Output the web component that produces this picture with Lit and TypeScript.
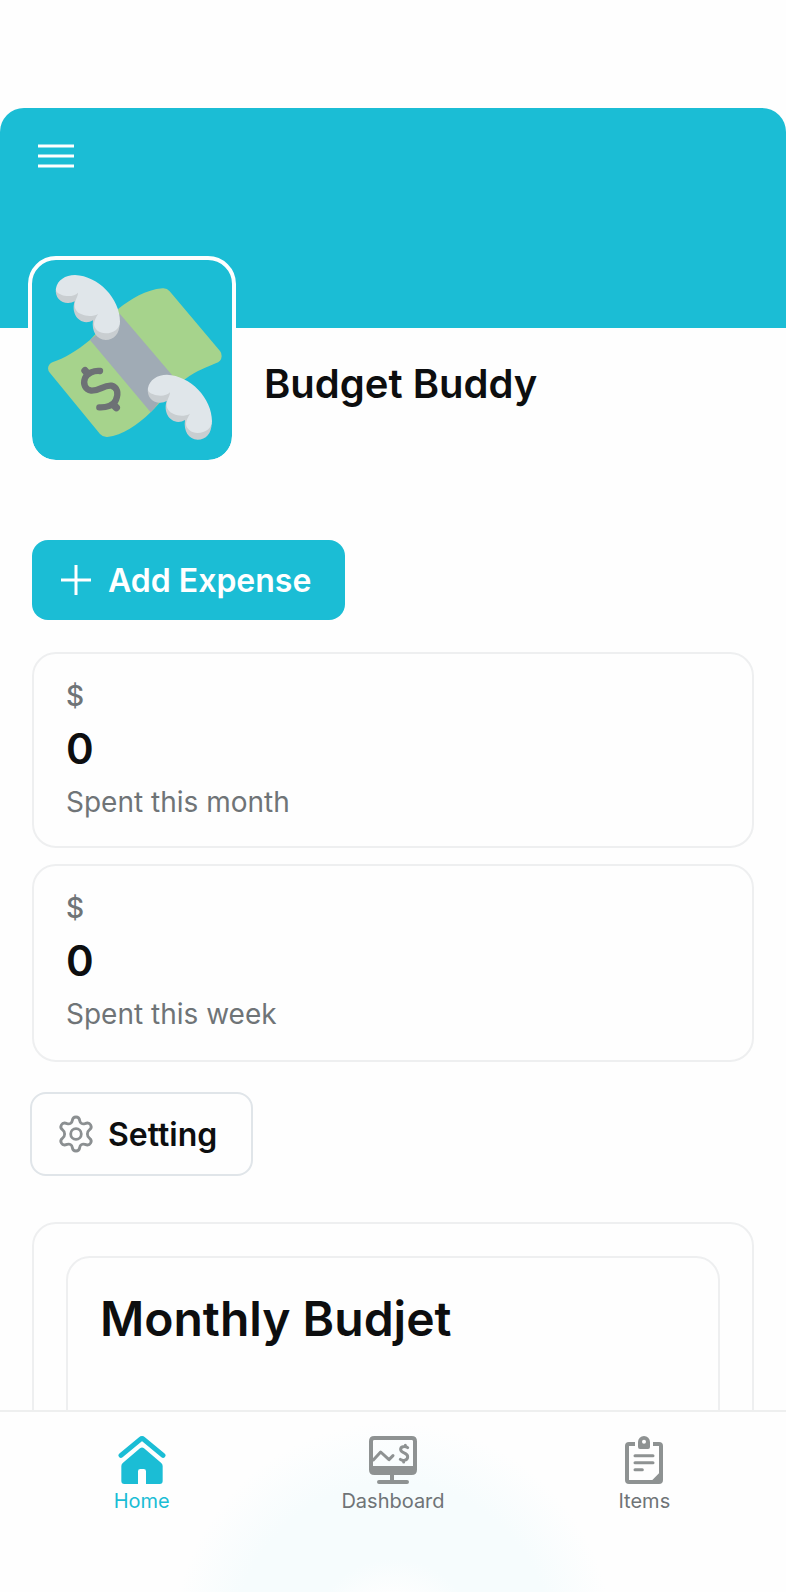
import { LitElement, html, css, svg } from "lit";
import { customElement, property } from "lit/decorators.js";

const moneyArt = html`
  <svg class="art" viewBox="36 45 600 600" aria-hidden="true">
    <path fill="#a6d38c" d="M210 285C172 317 130 341 99 351Q85 356 84 370Q84 378 90 384L240 567Q249 577 262 576C308 571 352 540 392 502C424 470 457 424 496 402C530 377 560 367 587 355Q604 350 605 334Q606 325 600 318L449 139Q441 129 428 130C377 134 333 163 297 190Z"/>
    <path fill="#a0abb5" d="M210 285C245 258 272 232 300 207L456 390C440 432 420 476 392 502Z"/>
    <g fill="none" stroke="#6d7175" stroke-linecap="round" stroke-linejoin="round">
      <path stroke-width="19" d="M240 378C222 376 202 384 195 399C188 418 196 434 214 437C239 438 250 420 274 422C293 427 296 445 288 464C282 482 258 488 238 487"/>
      <path stroke-width="22" d="M195 377L203 386M281 480L289 488"/>
    </g>
    ${[0, 1].map(
      (i) => svg`
      <g transform=${i ? "translate(276 299)" : "translate(0 0)"}>
        <path fill="#c9ced1" d="M108 130C103 158 124 175 145 174Q156 174 164 169C154 199 169 230 199 232Q210 232 219 226C214 260 230 284 257 285C282 285 299 267 299 235L225 140Z"/>
        <path fill="#e0e6ea" d="M108 130C112 106 136 90 165 90C235 93 300 160 300 230C300 251 280 265 257 265C238 264 223 254 222 238Q222 226 234 207C220 215 200 215 185 208C170 202 163 191 164 179C165 163 174 155 174 143C164 155 140 156 124 149C112 145 106 139 108 130Z"/>
      </g>`
    )}
  </svg>
`;

const menuIcon = html`<svg class="menu-icon" viewBox="0 0 36 24" aria-hidden="true">
  <path d="M0 2H36M0 12H36M0 22H36" stroke="#fff" stroke-width="3"/>
</svg>`;

const plusIcon = html`<svg class="btn-icon" viewBox="0 0 36 36" aria-hidden="true">
  <path d="M18 3V33M3 18H33" stroke="#fff" stroke-width="3"/>
</svg>`;

const gearIcon = html`<svg class="btn-icon" viewBox="0 0 36 36" aria-hidden="true">
  <g fill="none" stroke="#8b8f91" stroke-width="2.8" stroke-linejoin="round">
    <circle cx="18" cy="18" r="5.3"/>
    <path d="M18 1C20 1 21.400 2.200 21.700 4.500C22 7.200 24.300 8.500 26.900 7.600C29.500 6.600 31.500 7 32.600 8.900C33.800 10.900 33.300 12.500 31.400 13.900C28.700 15.900 28.700 20.100 31.400 22.100C33.300 23.500 33.800 25.100 32.600 27.100C31.500 29 29.500 29.400 26.900 28.400C24.300 27.500 22 28.800 21.700 31.500C21.400 33.800 20 35 18 35C16 35 14.600 33.800 14.300 31.500C14 28.800 11.700 27.500 9.100 28.400C6.500 29.400 4.500 29 3.400 27.100C2.200 25.100 2.700 23.500 4.600 22.100C7.300 20.100 7.300 15.900 4.600 13.900C2.700 12.500 2.200 10.900 3.400 8.900C4.500 7 6.500 6.600 9.100 7.600C11.700 8.500 14 7.200 14.300 4.500C14.600 2.200 16 1 18 1Z"/>
  </g>
</svg>`;

const homeIcon = html`<svg class="tab-icon" viewBox="84 108 144 144" aria-hidden="true">
  <path d="M93 166L151 118Q156 114 161 118L219 166" fill="none" stroke="currentColor" stroke-width="15" stroke-linecap="round"/>
  <path fill="currentColor" d="M150 145Q156 140 162 145L213 188Q218 192 218 198V243Q218 252 209 252H168V214Q168 207 161 207H151Q144 207 144 214V252H103Q94 252 94 243V198Q94 192 99 188Z"/>
</svg>`;

const dashboardIcon = html`<svg class="tab-icon" viewBox="120 108 144 144" aria-hidden="true">
  <path fill="currentColor" fill-rule="evenodd" d="M136 108H248Q264 108 264 124V209Q264 225 248 225H195V240H234Q240 240 240 246T234 252H150Q144 252 144 246T150 240H183V225H136Q120 225 120 209V124Q120 108 136 108ZM136 120Q132 120 132 124V198H252V124Q252 120 248 120Z"/>
  <g fill="none" stroke="currentColor" stroke-linecap="round" stroke-linejoin="round">
    <path stroke-width="9" d="M133 180L155 156L180 179L192 167"/>
    <path stroke-width="9" d="M236 143C228 137 214 139 215 149C216 161 236 156 236 170C236 181 222 184 214 178M229 138V136M224 186V184"/>
  </g>
</svg>`;

const itemsIcon = html`<svg class="tab-icon" viewBox="90 108 144 144" aria-hidden="true">
  <path fill="currentColor" fill-rule="evenodd" d="M117 126H135V138H117V240H187L207 220V138H189V126H207Q219 126 219 138V240Q219 252 207 252H117Q105 252 105 240V138Q105 126 117 126Z"/>
  <path fill="currentColor" fill-rule="evenodd" d="M144 126A18 18 0 0 1 180 126V141Q180 147 174 147H150Q144 147 144 141ZM156 125A6 6 0 1 0 168 125A6 6 0 1 0 156 125Z"/>
  <path d="M135 167H189M135 188H189M135 209H157" stroke="currentColor" stroke-width="9" stroke-linecap="round"/>
</svg>`;

@customElement("stat-card")
export class StatCard extends LitElement {
  @property() unit = "$";
  @property() value = "0";
  @property() label = "";

  static styles = css`
    :host {
      display: block;
      box-sizing: border-box;
      padding: 22px 32px 24px;
      border: 2px solid #eeeff0;
      border-radius: 24px;
      color: #6f7477;
      font-size: 28px;
      line-height: 40px;
    }
    p {
      margin: 0;
    }
    .unit {
      font-weight: 500;
    }
    .value {
      color: #0d0e0f;
      font-size: 42px;
      line-height: 66px;
      font-weight: 600;
    }
  `;

  render() {
    return html`
      <p class="unit">${this.unit}</p>
      <p class="value">${this.value}</p>
      <p>${this.label}</p>
    `;
  }
}

@customElement("app-root")
export class AppRoot extends LitElement {
  static styles = css`
    :host {
      display: flex;
      flex-direction: column;
      height: 100vh;
      background: #fefefe;
      color: #0d0e0f;
      font-family: Inter, "Liberation Sans", sans-serif;
    }
    main {
      flex: 1;
      min-height: 0;
      overflow-y: auto;
      scrollbar-width: none;
      padding-top: 108px;
      box-sizing: border-box;
    }
    h1,
    h2 {
      margin: 0;
      font-weight: 600;
    }
    button {
      font: inherit;
      cursor: pointer;
    }
    .banner {
      box-sizing: border-box;
      height: 220px;
      padding: 24px 26px;
      border-radius: 24px 24px 0 0;
      background: #1bbdd5;
    }
    .menu {
      display: flex;
      padding: 12px;
      border: 0;
      background: none;
    }
    .menu-icon {
      width: 36px;
      height: 24px;
    }
    .identity {
      display: flex;
      align-items: flex-start;
      gap: 28px;
      padding: 32px 28px 0;
    }
    .avatar {
      flex: none;
      margin-top: -104px;
      border: 4px solid #fefefe;
      border-radius: 28px;
      background: #1bbdd5;
      background-clip: padding-box;
    }
    .art {
      display: block;
      width: 200px;
      height: 200px;
    }
    h1 {
      font-size: 40px;
      line-height: 48px;
    }
    .content {
      padding: 76px 32px 32px;
    }
    .btn {
      display: flex;
      align-items: center;
      gap: 14px;
      height: 80px;
      padding: 0 34px 0 26px;
      border: 0;
      border-radius: 16px;
      font-size: 32px;
      font-weight: 600;
    }
    .btn-icon {
      width: 36px;
      height: 36px;
      overflow: visible;
    }
    .primary {
      background: #1bbdd5;
      color: #fff;
    }
    .secondary {
      margin: 0 -2px;
      box-sizing: content-box;
      border: 2px solid #e0e5e9;
      background: #fefefe;
      color: #0d0e0f;
    }
    .stats {
      display: grid;
      gap: 16px;
      margin: 32px 0 30px;
    }
    .stats > :last-child {
      padding-bottom: 26px;
    }
    .panel {
      box-sizing: border-box;
      padding: 32px;
      border: 2px solid #eeeff0;
      border-radius: 24px;
    }
    .outer {
      margin-top: 46px;
    }
    .inner {
      min-height: 400px;
    }
    h2 {
      font-size: 48px;
      line-height: 58px;
    }
    nav {
      display: grid;
      grid-template-columns: repeat(3, 1fr);
      padding: 24px 16px 78px;
      border-top: 2px solid #eeefef;
      background: radial-gradient(
        circle 220px at 50% 230px,
        #fefefe 20%,
        #f6fcfd 38%,
        #f6fcfd 72%,
        #fefefe 100%
      );
    }
    .tab {
      display: flex;
      flex-direction: column;
      align-items: center;
      gap: 4px;
      color: #6f7477;
      font-size: 20px;
      line-height: 26px;
      text-decoration: none;
    }
    .tab-icon {
      width: 48px;
      height: 48px;
      color: #8e9292;
    }
    .active,
    .active .tab-icon {
      color: #1bbdd5;
    }
  `;

  render() {
    return html`
      <main>
        <header>
          <div class="banner">
            <button class="menu" type="button" aria-label="Menu">${menuIcon}</button>
          </div>
          <div class="identity">
            <div class="avatar">${moneyArt}</div>
            <h1>Budget Buddy</h1>
          </div>
        </header>
        <div class="content">
          <button class="btn primary" type="button">${plusIcon}<span>Add Expense</span></button>
          <section class="stats">
            <stat-card label="Spent this month"></stat-card>
            <stat-card label="Spent this week"></stat-card>
          </section>
          <button class="btn secondary" type="button">${gearIcon}<span>Setting</span></button>
          <section class="panel outer">
            <div class="panel inner">
              <h2>Monthly Budjet</h2>
            </div>
          </section>
        </div>
      </main>
      <nav>
        <a class="tab active" href="#home" aria-current="page">${homeIcon}<span>Home</span></a>
        <a class="tab" href="#dashboard">${dashboardIcon}<span>Dashboard</span></a>
        <a class="tab" href="#items">${itemsIcon}<span>Items</span></a>
      </nav>
    `;
  }
}
